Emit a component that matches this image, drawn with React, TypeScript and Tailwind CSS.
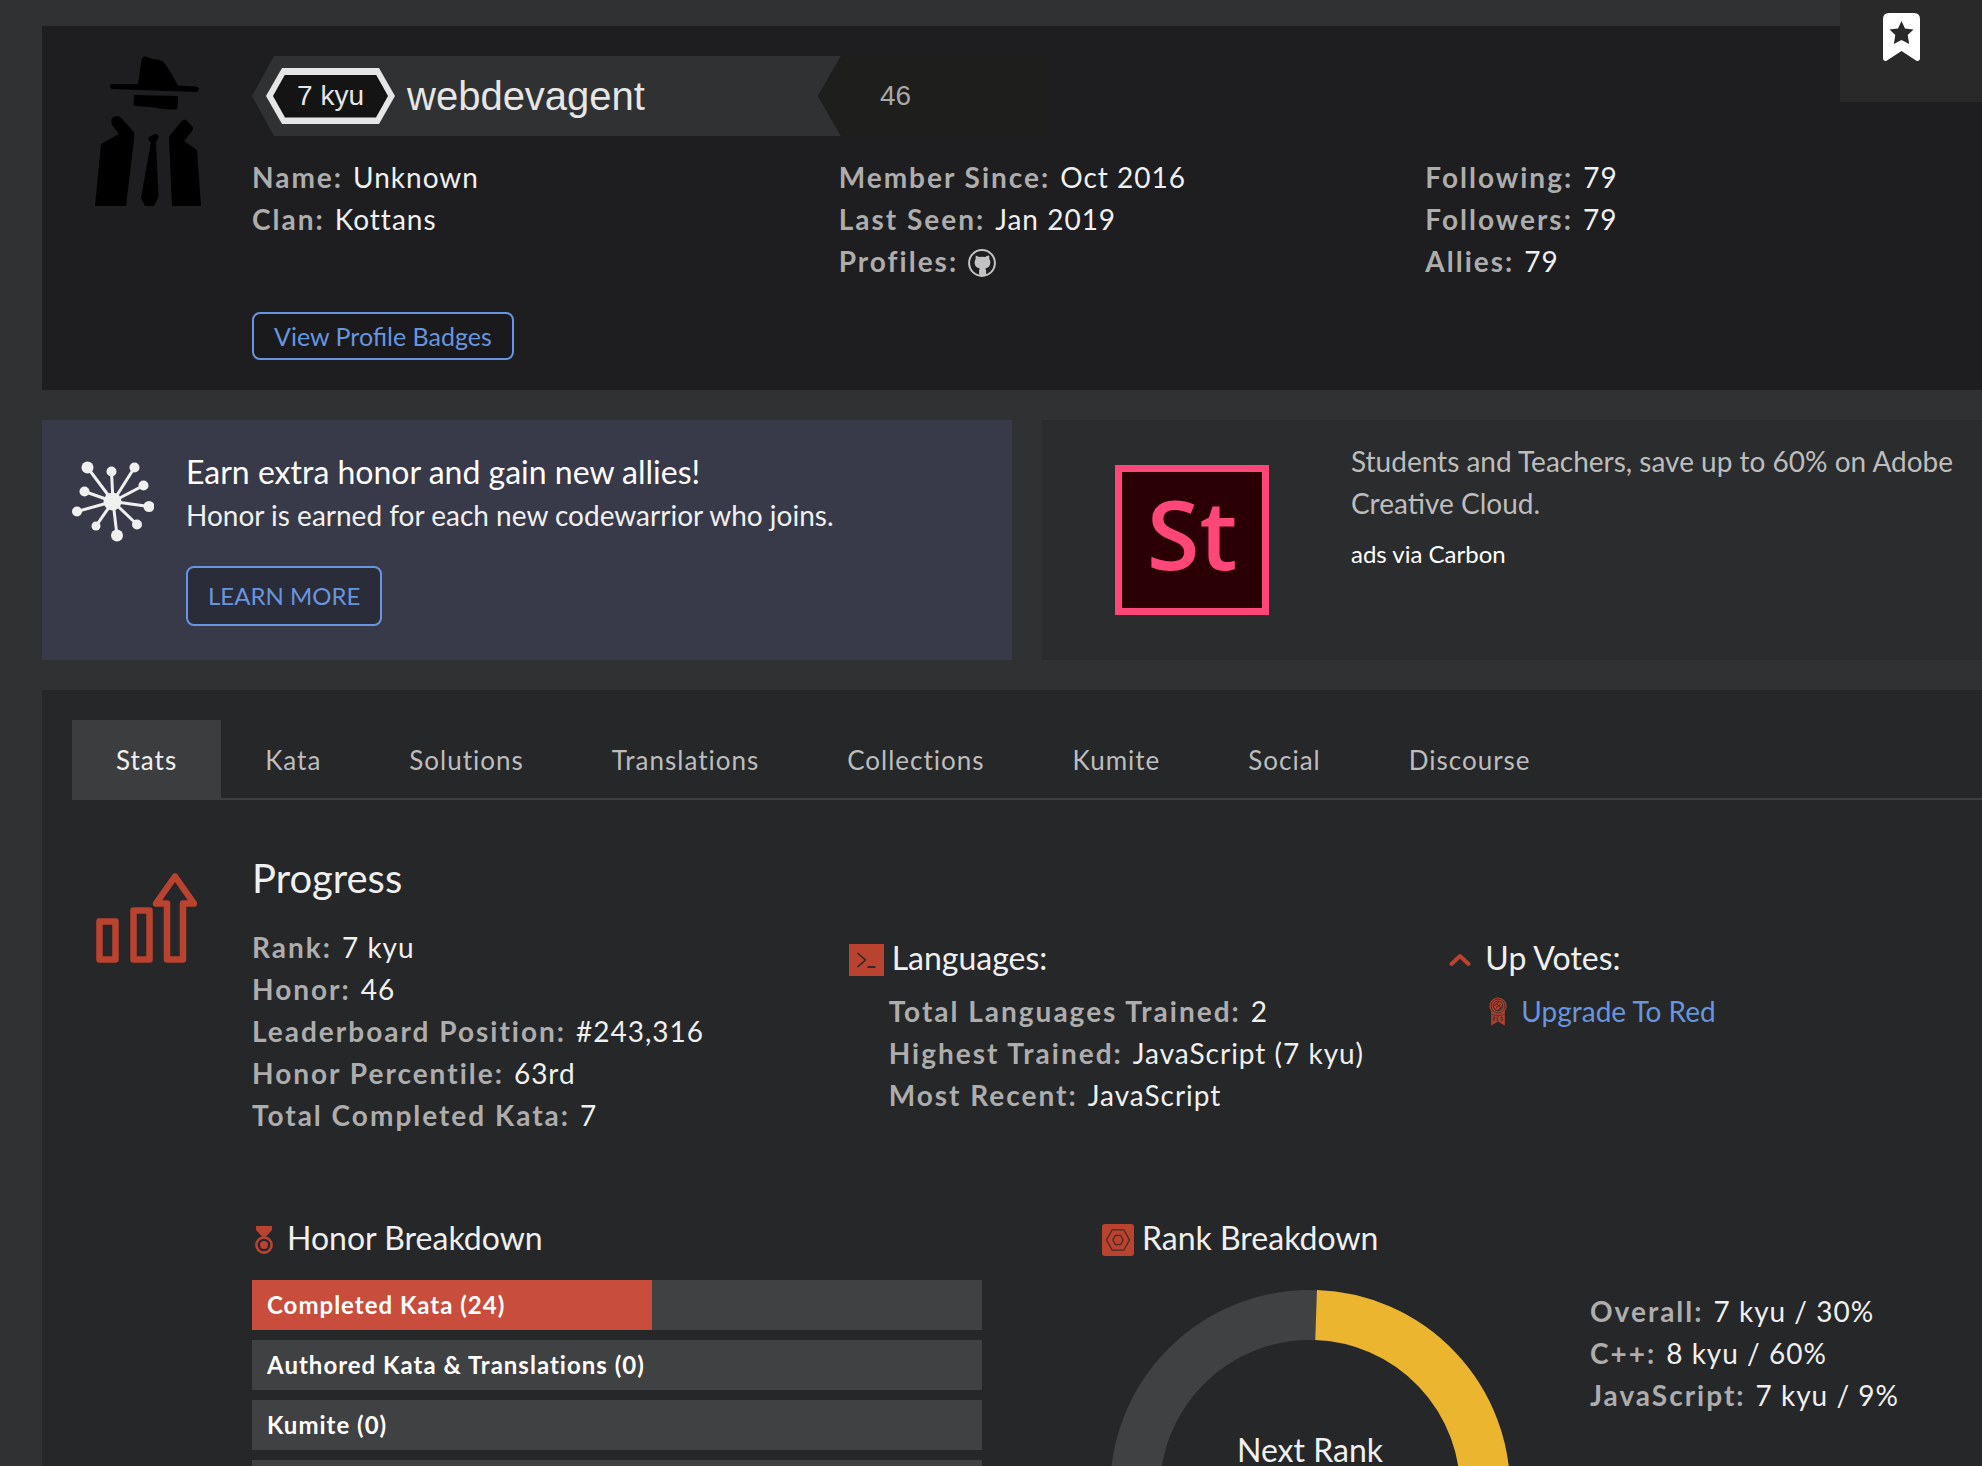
import type { ReactNode } from "react";

type Fact = { label: string; value: ReactNode };

const tabs = ["Stats", "Kata", "Solutions", "Translations", "Collections", "Kumite", "Social", "Discourse"];

const honorBars = [
  { label: "Completed Kata (24)", percent: 54.8 },
  { label: "Authored Kata & Translations (0)", percent: 0 },
  { label: "Kumite (0)", percent: 0 },
  { label: "", percent: 0 },
];

function GithubIcon() {
  return (
    <svg viewBox="0 0 28 28" className="mt-1 h-7 w-7" fill="#c2c2c2" role="img" aria-label="GitHub">
      <circle cx="14" cy="14" r="12.9" fill="none" stroke="#c2c2c2" strokeWidth="2" />
      <path d="M7 6.600c1.300.1 2.900.8 3.800 1.500a16 16 0 0 1 6.400 0c.9-.7 2.500-1.400 3.800-1.500.5 1.200.5 2.400.2 3.400.8 1 1.200 2.200 1.100 3.700-.2 3.500-1.900 5.200-5 5.700.5.600.8 1.300.8 2.300v5h-7v-5c0-1 .3-1.700.8-2.300-3.300-.5-5.200-2.200-5.300-5.700 0-1.500.3-2.700 1.100-3.700-.3-1-.2-2.200.3-3.400z" />
    </svg>
  );
}

function AgentIcon() {
  return (
    <svg viewBox="0 0 106 150" className="h-[150px] w-[106px]" aria-hidden="true">
      <path d="M43 28 L46.500 4 Q48 -1 52 1 Q56 3 62 3.500 Q68 4 71 9 Q77 18 83 29.500 L101 30.500 Q104 31 104 33.500 Q103.500 36 101 36 L18 33 Q15 33 15 30.500 Q15 28 18 28 Z" />
      <path d="M39 40 Q38 39 40 39 L82 40 Q83 40 83 42 L82.500 52 Q82 53.500 79 53.500 Q68 53.500 60 51.500 L40 50 Q38.500 49.500 38.500 48 Z" />
      <path d="M0 150 L6 88 L24 78 L17 69 Q14 61 22 60 Q25 60 28 64 L38 75 Q40 77 39.500 80 L31 150 Z" />
      <path d="M77 150 L74 82 Q74 79 77 77 L86 66 Q89 62 92 65 L97 70 Q99 72 97 75 L89 85 L102 94 L106 150 Z" />
      <path d="M54 81 L60 78 Q64 78 63.500 82 L61 86 L63.500 141 L59 150 H50 L46 142 L56 86 Q52 84 54 81 Z" />
    </svg>
  );
}

function AlliesIcon() {
  const nodes = [
    [15.5, 6.5, 6],
    [39.5, 10.5, 5],
    [62.5, 6.5, 5],
    [71.5, 24.5, 5],
    [77, 45.5, 5.5],
    [65, 63.5, 5],
    [45, 74.5, 6],
    [24, 65, 4.5],
    [5, 50.5, 5],
    [12.5, 30.5, 5],
  ];
  return (
    <svg viewBox="0 0 82 82" className="h-[82px] w-[82px]" fill="#f0f0f0" stroke="#f0f0f0" aria-hidden="true">
      {nodes.map(([x, y, r]) => (
        <g key={`${x}-${y}`}>
          <line x1="41" y1="40.5" x2={x} y2={y} strokeWidth="3" />
          <circle cx={x} cy={y} r={r} stroke="none" />
        </g>
      ))}
      <circle cx="40.5" cy="40.5" r="9" stroke="none" />
    </svg>
  );
}

function ProgressIcon() {
  return (
    <svg
      viewBox="0 0 101 90"
      className="h-[90px] w-[101px]"
      fill="none"
      stroke="#ba4330"
      strokeWidth="6.5"
      strokeLinejoin="round"
      aria-hidden="true"
    >
      <rect x="3.5" y="48.5" width="16" height="38" />
      <rect x="37.5" y="37.5" width="16" height="49" />
      <path d="M71 86.500 V30.500 H60 L79 3.500 L98 30.500 H87 V86.500 Z" />
    </svg>
  );
}

function TerminalIcon() {
  return (
    <svg viewBox="0 0 35 32" className="mt-1 h-8 w-[35px]" fill="none" stroke="#262729" strokeWidth="1.5" aria-hidden="true">
      <rect width="35" height="32" fill="#ba4330" stroke="none" />
      <path d="M8.500 9 L16.500 16 L8.500 23" />
      <path d="M18.500 23 H26.500" strokeWidth="1.8" />
    </svg>
  );
}

function ChevronIcon() {
  return (
    <svg viewBox="0 0 22 14" className="mt-1 h-[14px] w-[22px]" fill="none" aria-hidden="true">
      <path d="M2.500 11 L11 3 L19.500 11" stroke="#ba4330" strokeWidth="4" strokeLinecap="round" strokeLinejoin="round" />
    </svg>
  );
}

function RedRibbonIcon() {
  return (
    <svg viewBox="0 0 18 29" className="h-[29px] w-[18px]" fill="none" aria-hidden="true">
      <path d="M2.200 14 H15.800 V28.500 L9 24.500 L2.200 28.500 Z" fill="#b5402e" />
      <circle cx="9" cy="9" r="8.6" fill="#b5402e" />
      <circle cx="9" cy="9" r="7" stroke="#262729" strokeWidth=".8" />
      <circle cx="9" cy="9" r="4.8" stroke="#262729" strokeWidth=".9" />
      <path
        d="M5.500 9 q2 -3 4 -3.500 M7 11.500 q1 -3 4.500 -4 M9 12.800 q3 -1 3.500 -3.500 M8 6 q0 2 2 3 t1.500 3"
        stroke="#262729"
        strokeWidth=".9"
      />
      <path d="M2.500 17.500 Q9 19.500 15.500 17.500" stroke="#262729" strokeWidth=".7" />
      <path
        d="M4.300 24 V19.800 H5.700 V21.700 H4.300 L5.900 24 M10 19.800 H8 V24 H10 M8 21.800 H9.700 M12 19.800 V24 Q13.800 24 13.800 21.900 T12 19.800"
        stroke="#262729"
        strokeWidth=".6"
      />
    </svg>
  );
}

function MedalIcon() {
  return (
    <svg viewBox="0 0 18 29" className="mt-1 h-[29px] w-[18px]" aria-hidden="true">
      <path d="M1 0 H17 V4 L11.500 10 H6.500 L1 4 Z" fill="#ba4330" />
      <circle cx="9" cy="19" r="7.6" fill="#262729" stroke="#ba4330" strokeWidth="2.6" />
      <circle cx="9" cy="19" r="4" fill="#ba4330" />
    </svg>
  );
}

function RankIcon() {
  return (
    <svg viewBox="0 0 32 32" className="mt-1 h-8 w-8" fill="none" stroke="#4a2926" strokeWidth="1.3" aria-hidden="true">
      <rect width="32" height="32" rx="3" fill="#ba4330" stroke="none" />
      <path d="M4.500 16 L10.200 5.800 H21.800 L27.500 16 L21.800 26.200 H10.200 Z" />
      <path d="M10.800 16 L13.400 11.400 H18.600 L21.200 16 L18.600 20.600 H13.400 Z" />
    </svg>
  );
}

function BookmarkIcon() {
  return (
    <svg viewBox="0 0 37 48" className="h-12 w-[37px]" aria-hidden="true">
      <path d="M0 6 Q0 0 6 0 H31 Q37 0 37 6 V46 Q36 49 33 47.500 L18.500 38 L4 47.500 Q1 49 0 46 Z" fill="#fff" />
      <path
        d="M18.500 8 L22 15.600 L30.500 16.600 L24.700 22 L26.200 31 L18.500 27 L10.800 31 L12.300 22 L6.500 16.600 L15 15.600 Z"
        fill="#292929"
      />
    </svg>
  );
}

function Facts({ items, className = "" }: { items: Fact[]; className?: string }) {
  return (
    <dl className={`text-[28px] leading-[42px] ${className}`}>
      {items.map(({ label, value }) => (
        <div key={label} className="flex items-center gap-[10px]">
          <dt className="font-bold tracking-[2px] text-[#adadad]">{label}:</dt>
          <dd className="tracking-[1px] text-[#f0f0f0]">{value}</dd>
        </div>
      ))}
    </dl>
  );
}

function RankBadge() {
  return (
    <div className="flex h-20 items-center">
      <div className="flex h-20 w-[589px] items-center gap-3 bg-[#303133] pl-[14px] [clip-path:polygon(22px_0,100%_0,566px_50%,100%_100%,22px_100%,0_50%)]">
        <span className="grid h-14 w-[129px] place-items-center bg-[#e6e6e6] [clip-path:polygon(16px_0,113px_0,100%_50%,113px_100%,16px_100%,0_50%)]">
          <span className="grid h-[43px] w-[115px] place-items-center bg-[#141414] font-['Liberation_Sans',sans-serif] text-[28px] leading-none text-[#e6e6e6] [clip-path:polygon(12px_0,103px_0,100%_50%,103px_100%,12px_100%,0_50%)]">
            7 kyu
          </span>
        </span>
        <h1 className="font-['Liberation_Sans',sans-serif] text-[40px] leading-none text-[#e6e6e6]">webdevagent</h1>
      </div>
      <div className="-ml-[23px] flex h-20 w-[230px] items-center bg-[#1e1e1d] pl-[62px] font-['Liberation_Sans',sans-serif] text-[28px] text-[#a8a8a8] [clip-path:polygon(23px_0,100%_0,100%_100%,23px_100%,0_50%)]">
        46
      </div>
    </div>
  );
}

function RankDonut() {
  return (
    <div className="relative h-[400px] w-[400px] shrink-0">
      <svg viewBox="0 0 400 400" className="h-full w-full" fill="none" strokeWidth="50" aria-hidden="true">
        <circle cx="200" cy="200" r="175" stroke="#404143" />
        <path d="M206.100 25.100 A175 175 0 0 1 200 375" stroke="#ebb52f" />
      </svg>
      <p className="absolute inset-x-0 top-[138px] text-center text-[32px] leading-[44px] text-[#f0f0f0]">Next Rank</p>
    </div>
  );
}

export default function App() {
  return (
    <div className="h-screen overflow-hidden bg-[#303133] font-[Lato,sans-serif] text-[#f0f0f0]">
      <button
        type="button"
        aria-label="Bookmark"
        className="absolute top-0 right-0 flex h-[102px] w-[142px] justify-center bg-[#292929] pt-[13px] pr-5"
      >
        <BookmarkIcon />
      </button>

      <main className="mt-[26px] -mr-[30px] ml-[42px] flex flex-col gap-[30px]">
        <header className="flex bg-[#1e1e20] py-[30px]">
          <div className="flex w-[210px] shrink-0 pl-[53px]">
            <AgentIcon />
          </div>
          <div className="flex grow flex-col items-start">
            <RankBadge />
            <div className="mt-5 grid w-full grid-cols-3">
              <Facts
                items={[
                  { label: "Name", value: "Unknown" },
                  { label: "Clan", value: "Kottans" },
                ]}
              />
              <Facts
                items={[
                  { label: "Member Since", value: "Oct 2016" },
                  { label: "Last Seen", value: "Jan 2019" },
                  {
                    label: "Profiles",
                    value: (
                      <a href="#github" className="flex">
                        <GithubIcon />
                      </a>
                    ),
                  },
                ]}
              />
              <Facts
                items={[
                  { label: "Following", value: "79" },
                  { label: "Followers", value: "79" },
                  { label: "Allies", value: "79" },
                ]}
              />
            </div>
            <button
              type="button"
              className="mt-[30px] h-12 rounded-lg border-2 border-[#6795de] bg-[#1a1a1c] px-5 text-[25px] leading-[42px] text-[#6795de]"
            >
              View Profile Badges
            </button>
          </div>
        </header>

        <div className="grid grid-cols-2 gap-[30px]">
          <section className="flex bg-[#393a49] pt-[30px] pb-[34px]">
            <div className="flex w-[144px] shrink-0 pt-[11px] pl-[30px]">
              <AlliesIcon />
            </div>
            <div>
              <h2 className="text-[32px] leading-[44px] text-white">Earn extra honor and gain new allies!</h2>
              <p className="text-[28px] leading-[42px]">Honor is earned for each new codewarrior who joins.</p>
              <button
                type="button"
                className="mt-[30px] h-[60px] rounded-lg border-2 border-[#6795de] bg-[#2b2c39] px-5 text-2xl text-[#6795de]"
              >
                LEARN MORE
              </button>
            </div>
          </section>

          <aside className="flex bg-[#2b2c2e] pt-5">
            <div className="w-[309px] shrink-0 pt-[25px] pl-[73px]">
              <div className="flex h-[150px] w-[154px] justify-center border-[7px] border-[#ff4679] bg-[#2a0006] font-['Open_Sans',sans-serif] text-[96px] leading-[122px] font-semibold text-[#ff4679]">
                St
              </div>
            </div>
            <div className="pr-10">
              <a href="#adobe" className="block text-[28px] leading-[42px] text-[#bdbdbd]">
                Students and Teachers, save up to 60% on Adobe Creative Cloud.
              </a>
              <a href="#carbon" className="mt-3 block text-2xl leading-9 text-white">
                ads via Carbon
              </a>
            </div>
          </aside>
        </div>

        <section className="bg-[#262729] px-[30px] pt-[30px]">
          <div role="tablist" className="flex h-20 border-b-2 border-[#3c3d3f]">
            {tabs.map((tab, index) => (
              <button
                key={tab}
                type="button"
                role="tab"
                aria-selected={index === 0}
                className="h-20 px-11 text-[26px] tracking-[1px] text-[#bdbdbd] aria-selected:bg-[#3c3d3f] aria-selected:text-[#f0f0f0]"
              >
                {tab}
              </button>
            ))}
          </div>

          <div className="-mr-[30px] flex pt-12">
            <div className="flex w-[180px] shrink-0 pt-[25px] pl-6">
              <ProgressIcon />
            </div>
            <div className="grow">
              <h2 className="text-[40px] leading-[60px]">Progress</h2>
              <div className="mt-[18px] grid grid-cols-3">
                <Facts
                  items={[
                    { label: "Rank", value: "7 kyu" },
                    { label: "Honor", value: "46" },
                    { label: "Leaderboard Position", value: "#243,316" },
                    { label: "Honor Percentile", value: "63rd" },
                    { label: "Total Completed Kata", value: "7" },
                  ]}
                />
                <div className="pt-[10px] pl-[10px]">
                  <h3 className="flex items-center gap-2 text-[32px] leading-[44px]">
                    <TerminalIcon />
                    Languages:
                  </h3>
                  <Facts
                    className="mt-[10px] pl-10"
                    items={[
                      { label: "Total Languages Trained", value: "2" },
                      { label: "Highest Trained", value: "JavaScript (7 kyu)" },
                      { label: "Most Recent", value: "JavaScript" },
                    ]}
                  />
                </div>
                <div className="pt-[10px] pl-6">
                  <h3 className="flex items-center gap-[14px] text-[32px] leading-[44px]">
                    <ChevronIcon />
                    Up Votes:
                  </h3>
                  <a
                    href="#upgrade"
                    className="mt-[10px] flex items-center gap-[14px] pl-10 text-[28px] leading-[42px] text-[#6795de]"
                  >
                    <RedRibbonIcon />
                    Upgrade To Red
                  </a>
                </div>
              </div>

              <div className="mt-20 grid grid-cols-[850fr_910fr]">
                <section className="pr-[120px]">
                  <h3 className="flex items-center gap-[14px] pl-[3px] text-[32px] leading-[44px]">
                    <MedalIcon />
                    Honor Breakdown
                  </h3>
                  <ul className="mt-5 flex flex-col gap-[10px]">
                    {honorBars.map(({ label, percent }, index) => (
                      <li key={index} className="relative h-[50px] bg-[#404143]">
                        <div className="h-full bg-[#c84d3c]" style={{ width: `${percent}%` }} />
                        <span className="absolute inset-y-0 left-[15px] text-2xl leading-[50px] font-bold tracking-[1px] text-white">
                          {label}
                        </span>
                      </li>
                    ))}
                  </ul>
                </section>
                <section>
                  <h3 className="flex items-center gap-2 text-[32px] leading-[44px]">
                    <RankIcon />
                    Rank Breakdown
                  </h3>
                  <div className="mt-[30px] flex gap-20 pl-2">
                    <RankDonut />
                    <Facts
                      items={[
                        { label: "Overall", value: "7 kyu / 30%" },
                        { label: "C++", value: "8 kyu / 60%" },
                        { label: "JavaScript", value: "7 kyu / 9%" },
                      ]}
                    />
                  </div>
                </section>
              </div>
            </div>
          </div>
        </section>
      </main>
    </div>
  );
}
